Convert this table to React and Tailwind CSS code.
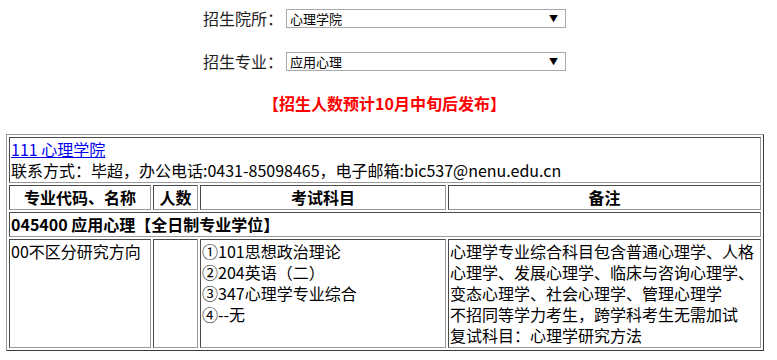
const subjects = ['①101思想政治理论', '②204英语（二）', '③347心理学专业综合', '④--无'];

const notes = [
  '心理学专业综合科目包含普通心理学、人格心理学、发展心理学、临床与咨询心理学、变态心理学、社会心理学、管理心理学',
  '不招同等学力考生，跨学科考生无需加试',
  '复试科目：心理学研究方法',
];

// classic inset cell border: dark top/left, light bottom/right
const cell =
  'border border-t-[#4a4a4a] border-l-[#4a4a4a] border-r-[#9a9a9a] border-b-[#9a9a9a] p-[1px]';

const FakeSelect = ({ value }) => (
  <div className="w-[280px] h-[19px] border border-[#a9a9a9] bg-white flex items-center pl-[3px] pr-[7px] text-[13px] leading-[17px]">
    <span className="flex-1">{value}</span>
    <span className="text-[9px] leading-none text-black">▼</span>
  </div>
);

const Field = ({ label, value }) => (
  <div className="h-[19px] flex items-center justify-center pr-[8px]">
    <span className="text-[16px] leading-[21px] text-[#222] mr-[3px]">{label}</span>
    <FakeSelect value={value} />
  </div>
);

export default function App() {
  return (
    <div
      className="w-[777px] h-[360px] bg-white text-black overflow-hidden"
      style={{ fontFamily: '"Microsoft YaHei", "Noto Sans CJK SC", sans-serif' }}
    >
      <div className="pt-[9px] flex flex-col gap-[24px]">
        <Field label="招生院所：" value="心理学院" />
        <Field label="招生专业：" value="应用心理" />
      </div>

      <p className="mt-[22px] text-center pr-[8px] text-[16px] leading-[21px] font-bold text-[#ff0000]">
        【招生人数预计10月中旬后发布】
      </p>

      <table className="mt-[20px] ml-[6px] w-[758px] table-fixed border-separate border-spacing-[2px] border border-t-[#9a9a9a] border-l-[#9a9a9a] border-r-[#3a3a3a] border-b-[#3a3a3a] text-[16px] leading-[21px]">
        <colgroup>
          <col className="w-[142px]" />
          <col className="w-[45px]" />
          <col className="w-[246px]" />
          <col />
        </colgroup>
        <tbody>
          <tr>
            <td colSpan={4} className={`${cell} text-left`}>
              <a href="#" className="text-[#0000ee] underline">
                111 心理学院
              </a>
              <div>联系方式：毕超，办公电话:0431-85098465，电子邮箱:bic537@nenu.edu.cn</div>
            </td>
          </tr>
          <tr className="font-bold text-center">
            <th className={cell}>专业代码、名称</th>
            <th className={cell}>人数</th>
            <th className={cell}>考试科目</th>
            <th className={cell}>备注</th>
          </tr>
          <tr>
            <td colSpan={4} className={`${cell} font-bold`}>
              045400 应用心理【全日制专业学位】
            </td>
          </tr>
          <tr className="align-top">
            <td className={cell}>00不区分研究方向</td>
            <td className={cell}></td>
            <td className={cell}>
              {subjects.map((s) => (
                <div key={s}>{s}</div>
              ))}
            </td>
            <td className={cell}>
              {notes.map((n) => (
                <div key={n}>{n}</div>
              ))}
            </td>
          </tr>
        </tbody>
      </table>
    </div>
  );
}
